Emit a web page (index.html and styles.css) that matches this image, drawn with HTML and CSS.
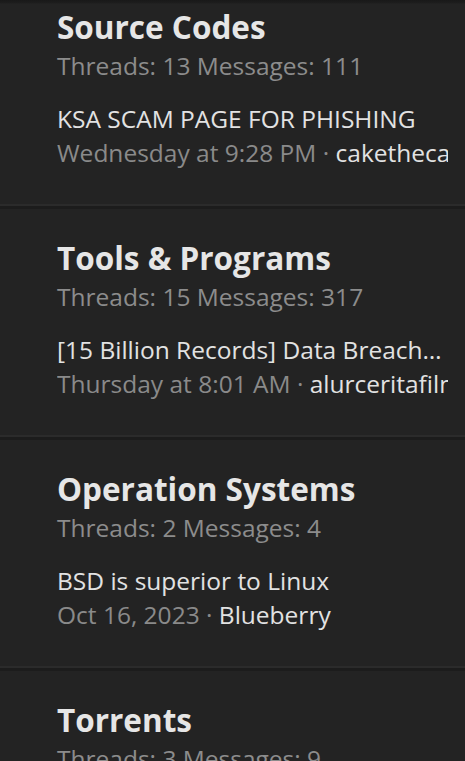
FILE: index.html
```html
<!DOCTYPE html>
<html lang="en">
<head>
<meta charset="utf-8">
<title>Forums</title>
<link rel="stylesheet" href="styles.css">
</head>
<body>
<div class="top-shadow"></div>
<main class="node-list">
  <section class="node">
    <h3 class="node-title">Source Codes</h3>
    <div class="node-stats"><span>Threads:</span> <b>13</b> <span>Messages:</span> <b>111</b></div>
    <div class="node-latest">KSA SCAM PAGE FOR PHISHING</div>
    <div class="node-meta"><span class="date">Wednesday at 9:28 PM</span> · <span class="user">cakethecakeman</span></div>
  </section>
  <section class="node">
    <h3 class="node-title">Tools &amp; Programs</h3>
    <div class="node-stats"><span>Threads:</span> <b>15</b> <span>Messages:</span> <b>317</b></div>
    <div class="node-latest">[15 Billion Records] Data Breach Collection 2024</div>
    <div class="node-meta"><span class="date">Thursday at 8:01 AM</span> · <span class="user">alurceritafilm</span></div>
  </section>
  <section class="node">
    <h3 class="node-title">Operation Systems</h3>
    <div class="node-stats"><span>Threads:</span> <b>2</b> <span>Messages:</span> <b>4</b></div>
    <div class="node-latest">BSD is superior to Linux</div>
    <div class="node-meta"><span class="date">Oct 16, 2023</span> · <span class="user">Blueberry</span></div>
  </section>
  <section class="node">
    <h3 class="node-title">Torrents</h3>
    <div class="node-stats"><span>Threads:</span> <b>3</b> <span>Messages:</span> <b>9</b></div>
    <div class="node-latest">Latest torrent</div>
    <div class="node-meta"><span class="date">Sep 2, 2023</span> · <span class="user">user</span></div>
  </section>
</main>
</body>
</html>
```

FILE: styles.css
```css
html, body {
  margin: 0;
  padding: 0;
  background: #232323;
  height: 100%;
  overflow: hidden;
}
body {
  font-family: "Open Sans", "Noto Sans", sans-serif;
  color: #e2e2e2;
}
.top-shadow {
  position: fixed;
  top: 0;
  left: 0;
  right: 0;
  height: 4px;
  background: linear-gradient(#191919, #1d1d1d 70%, #232323);
  z-index: 2;
}
.node-list {
  margin-top: -22px;
  display: flex;
  flex-direction: column;
}
.node {
  padding: 30px 17px 36px 57px;
  border-bottom: 3px solid #1c1c1c;
  box-shadow: inset 0 -2px 0 #2b2b2b;
  min-width: 0;
}
.node-title {
  margin: 0;
  font-size: 31.5px;
  line-height: 38px;
  font-weight: 700;
  color: #e6e6e6;
  white-space: nowrap;
}
.node-stats {
  margin-top: 5px;
  font-size: 24.5px;
  line-height: 30px;
  color: #8c8c8c;
  white-space: nowrap;
}
.node-stats b {
  font-weight: 400;
  color: #8c8c8c;
}
.node-latest {
  margin-top: 21px;
  font-size: 24.5px;
  line-height: 34px;
  color: #e2e2e2;
  white-space: nowrap;
  overflow: hidden;
  text-overflow: ellipsis;
}
.node-meta {
  font-size: 24.5px;
  line-height: 34px;
  color: #8a8a8a;
  white-space: nowrap;
  overflow: hidden;
}
.node-meta .user {
  color: #e2e2e2;
}
```
